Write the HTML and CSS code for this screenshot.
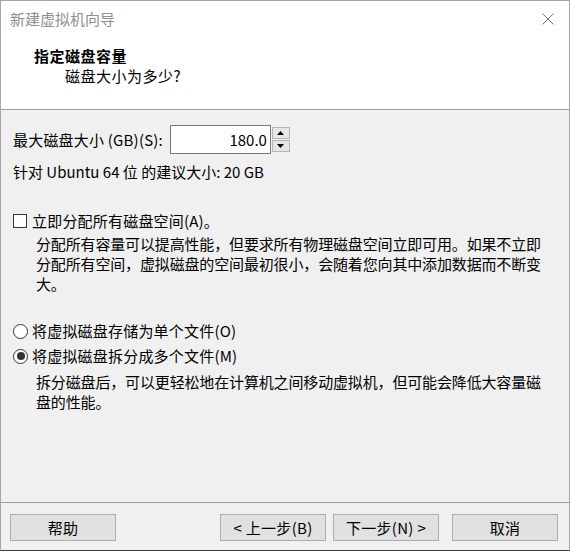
FILE: index.html
```html
<!DOCTYPE html>
<html lang="zh-CN">
<head>
<meta charset="utf-8">
<title>新建虚拟机向导</title>
<link rel="stylesheet" href="styles.css">
</head>
<body>
<div class="window">
  <div class="header">
    <div class="titlebar">
      <span class="title">新建虚拟机向导</span>
      <svg class="close" width="12" height="12" viewBox="0 0 12 12"><path d="M0.5 0.5 L11.5 11.5 M11.5 0.5 L0.5 11.5" stroke="#6f6f6f" stroke-width="1" fill="none"/></svg>
    </div>
    <div class="heading">指定磁盘容量</div>
    <div class="subheading">磁盘大小为多少?</div>
  </div>
  <div class="sep"></div>
  <div class="body">
    <div class="size-row">
      <span class="label">最大磁盘大小 (GB)(S):</span>
      <div class="spinbox">
        <div class="spin-input">180.0</div>
        <div class="spin-buttons">
          <div class="spin-btn"><svg width="7" height="4" viewBox="0 0 7 4"><path d="M3.5 0 L7 4 L0 4 Z" fill="#000"/></svg></div>
          <div class="spin-btn"><svg width="7" height="4" viewBox="0 0 7 4"><path d="M0 0 L7 0 L3.5 4 Z" fill="#000"/></svg></div>
        </div>
      </div>
    </div>
    <div class="suggest">针对 Ubuntu 64 位 的建议大小: 20 GB</div>
    <div class="option check-row">
      <span class="checkbox"></span>
      <span class="label">立即分配所有磁盘空间(A)。</span>
    </div>
    <div class="desc desc-check">分配所有容量可以提高性能，但要求所有物理磁盘空间立即可用。如果不立即<br>分配所有空间，虚拟磁盘的空间最初很小，会随着您向其中添加数据而不断变<br>大。</div>
    <div class="option radio-row first">
      <span class="radio"></span>
      <span class="label">将虚拟磁盘存储为单个文件(O)</span>
    </div>
    <div class="option radio-row second">
      <span class="radio checked"></span>
      <span class="label">将虚拟磁盘拆分成多个文件(M)</span>
    </div>
    <div class="desc desc-radio">拆分磁盘后，可以更轻松地在计算机之间移动虚拟机，但可能会降低大容量磁<br>盘的性能。</div>
  </div>
  <div class="sep"></div>
  <div class="footer">
    <button class="btn">帮助</button>
    <div class="spacer"></div>
    <button class="btn">&lt; 上一步(B)</button>
    <button class="btn next">下一步(N) &gt;</button>
    <button class="btn cancel">取消</button>
  </div>
</div>
</body>
</html>
```
FILE: styles.css
```css
* { box-sizing: border-box; }
html, body {
  margin: 0;
  padding: 0;
  width: 570px;
  height: 551px;
  overflow: hidden;
  background: #f0f0f0;
}
body {
  font-family: "Noto Sans CJK SC", "Microsoft YaHei", sans-serif;
  font-size: 15px;
  color: #000;
}
.window {
  width: 570px;
  height: 551px;
  display: flex;
  flex-direction: column;
  border: 1px solid #a6a6a6;
  border-bottom-color: #3a3a3a;
  background: #f0f0f0;
}
.header {
  height: 108px;
  background: #fff;
  flex: none;
}
.titlebar {
  height: 36px;
  display: flex;
  align-items: center;
  justify-content: space-between;
  padding-left: 9px;
  padding-right: 15px;
}
.title {
  color: #8f8f8f;
  font-size: 15px;
  line-height: 20px;
}
.heading {
  margin-top: 9px;
  padding-left: 33px;
  font-weight: bold;
  line-height: 20px;
  letter-spacing: 0.5px;
}
.subheading {
  padding-left: 64px;
  line-height: 20px;
  letter-spacing: 0.5px;
}
.sep {
  height: 1px;
  background: #a0a0a0;
  flex: none;
}
.body {
  flex: 1;
  padding-left: 12px;
  background: #f0f0f0;
}
.label {
  line-height: 20px;
  letter-spacing: 0.2px;
}
.size-row {
  margin-top: 15px;
  display: flex;
  align-items: center;
  height: 29px;
}
.spinbox {
  display: flex;
  align-items: center;
  margin-left: 7px;
}
.spin-input {
  width: 101px;
  height: 29px;
  border: 1px solid #7a7a7a;
  background: #fff;
  text-align: right;
  padding-right: 3px;
  line-height: 27px;
}
.spin-buttons {
  display: flex;
  flex-direction: column;
  gap: 1px;
  margin-left: 1px;
}
.spin-btn {
  width: 18px;
  height: 12px;
  border: 1px solid #b5b5b5;
  background: #e6e6e6;
  display: flex;
  align-items: center;
  justify-content: center;
}
.suggest {
  margin-top: 8px;
  line-height: 20px;
}
.option {
  display: flex;
  align-items: center;
  height: 20px;
}
.check-row {
  margin-top: 29px;
}
.checkbox {
  width: 14px;
  height: 14px;
  border: 1px solid #333;
  background: #fff;
  margin-right: 5px;
  flex: none;
}
.desc {
  padding-left: 23px;
  line-height: 20px;
  letter-spacing: -0.15px;
  white-space: nowrap;
}
.desc-check {
  margin-top: 3px;
}
.radio-row.first {
  margin-top: 27px;
}
.radio-row.second {
  margin-top: 5px;
}
.radio {
  width: 15px;
  height: 15px;
  border: 1px solid #333;
  border-radius: 50%;
  background: #fff;
  margin-right: 4px;
  flex: none;
  display: flex;
  align-items: center;
  justify-content: center;
}
.radio.checked::after {
  content: "";
  width: 8px;
  height: 8px;
  border-radius: 50%;
  background: #333;
}
.desc-radio {
  margin-top: 6px;
}
.footer {
  height: 47px;
  flex: none;
  display: flex;
  align-items: flex-start;
  padding: 11px 11px 0 9px;
  background: #f0f0f0;
}
.spacer { flex: 1; }
.btn {
  width: 106px;
  height: 27px;
  border: 1px solid #adadad;
  background: #e1e1e1;
  font-family: inherit;
  font-size: 15px;
  color: #000;
  padding: 0;
  line-height: 25px;
  letter-spacing: 0.3px;
}
.btn.next { margin-left: 7px; }
.btn.cancel { margin-left: 13px; }
```
